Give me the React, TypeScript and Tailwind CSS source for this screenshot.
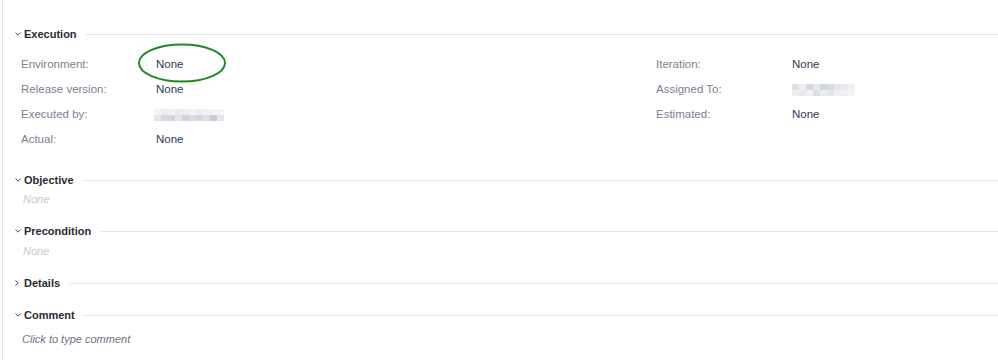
import React from 'react';

const font = { fontFamily: '"Liberation Sans", Arial, sans-serif' };

const Chevron = ({ open = true }: { open?: boolean }) =>
  open ? (
    <svg width="6" height="4" viewBox="0 0 6 4" className="shrink-0">
      <path d="M0.5 0.5 L3 3.2 L5.5 0.5" fill="none" stroke="#42526e" strokeWidth="1" />
    </svg>
  ) : (
    <svg width="4" height="6" viewBox="0 0 4 6" className="shrink-0">
      <path d="M0.5 0.5 L3.2 3 L0.5 5.5" fill="none" stroke="#42526e" strokeWidth="1" />
    </svg>
  );

const SectionHeader = ({ title, open = true }: { title: string; open?: boolean }) => (
  <div className="flex h-[20px] items-center pl-[12px]">
    <span className="flex w-[9px] justify-start">
      <Chevron open={open} />
    </span>
    <span className="text-[11px] font-bold text-[#262b33]">{title}</span>
    <span className="ml-[9px] h-px flex-1 bg-[#e6e6e6]" />
  </div>
);

// pixelated blur used for hidden user names
const Mosaic = ({ cells }: { cells: string[][] }) => (
  <div className="flex flex-col">
    {cells.map((row, i) => (
      <div key={i} className="flex">
        {row.map((c, j) => (
          <span key={j} className="h-[6px] w-[7px]" style={{ backgroundColor: c }} />
        ))}
      </div>
    ))}
  </div>
);

const executedBy = [
  ['#f3f4f6', '#eceef1', '#f1f2f4', '#e9ebef', '#eef0f2', '#f2f3f5', '#eceef1', '#f0f1f3', '#f4f5f6', '#f3f4f6'],
  ['#e3e5ea', '#d6d9df', '#d2d5dc', '#e2e5ea', '#cfd3da', '#d9dce2', '#d3d6dd', '#dde0e5', '#c7cbd3', '#e4e6ea'],
];

const assignedTo = [
  ['#dfe1e6', '#eceef1', '#d6d9df', '#e5e7eb', '#d3d6dc', '#d8dbe0', '#e4e6ea', '#e9ebee', '#eef0f2'],
  ['#eceef1', '#e6e8ec', '#f0f1f3', '#dde0e5', '#e9ebee', '#e3e5e9', '#eceef1', '#f0f1f3', '#f2f3f5'],
];

const Label = ({ children }: { children: React.ReactNode }) => (
  <div className="flex h-[25px] items-center text-[11.5px] text-[#7a8190]">{children}</div>
);

const Value = ({ children }: { children: React.ReactNode }) => (
  <div className="flex h-[25px] items-center text-[11.5px] text-[#2c3a55]">{children}</div>
);

export default function App() {
  return (
    <div className="h-[360px] w-[998px] overflow-hidden bg-white pl-[2px]" style={font}>
      <div className="h-full border-l border-[#e2e2e2] pt-[24px]">
        <SectionHeader title="Execution" />
        <div className="mt-[8px] grid grid-cols-[135px_500px_136px_1fr] pl-[18px]">
          <div className="flex flex-col">
            <Label>Environment:</Label>
            <Label>Release version:</Label>
            <Label>Executed by:</Label>
            <Label>Actual:</Label>
          </div>
          <div className="flex flex-col">
            <div className="relative">
              <Value>None</Value>
              <svg
                width="92"
                height="42"
                viewBox="0 0 92 42"
                className="pointer-events-none absolute left-[-20px] top-[-10px]"
              >
                <ellipse cx="46" cy="21" rx="43" ry="18.5" fill="none" stroke="#1f8a1f" strokeWidth="2" />
              </svg>
            </div>
            <Value>None</Value>
            <div className="flex h-[25px] items-center">
              <span className="-ml-[2px]">
                <Mosaic cells={executedBy} />
              </span>
            </div>
            <Value>None</Value>
          </div>
          <div className="flex flex-col">
            <Label>Iteration:</Label>
            <Label>Assigned To:</Label>
            <Label>Estimated:</Label>
          </div>
          <div className="flex flex-col">
            <Value>None</Value>
            <div className="flex h-[25px] items-center">
              <Mosaic cells={assignedTo} />
            </div>
            <Value>None</Value>
          </div>
        </div>

        <div className="mt-[18px]">
          <SectionHeader title="Objective" />
          <div className="flex h-[19px] items-center pl-[20px] text-[11px] italic text-[#c5c9d0]">None</div>
        </div>

        <div className="mt-[12px]">
          <SectionHeader title="Precondition" />
          <div className="flex h-[21px] items-center pl-[20px] text-[11px] italic text-[#c5c9d0]">None</div>
        </div>

        <div className="mt-[11px]">
          <SectionHeader title="Details" open={false} />
        </div>

        <div className="mt-[12px]">
          <SectionHeader title="Comment" />
          <div className="flex h-[29px] items-center pl-[19px] text-[11px] italic text-[#6e7583]">
            Click to type comment
          </div>
        </div>
      </div>
    </div>
  );
}
